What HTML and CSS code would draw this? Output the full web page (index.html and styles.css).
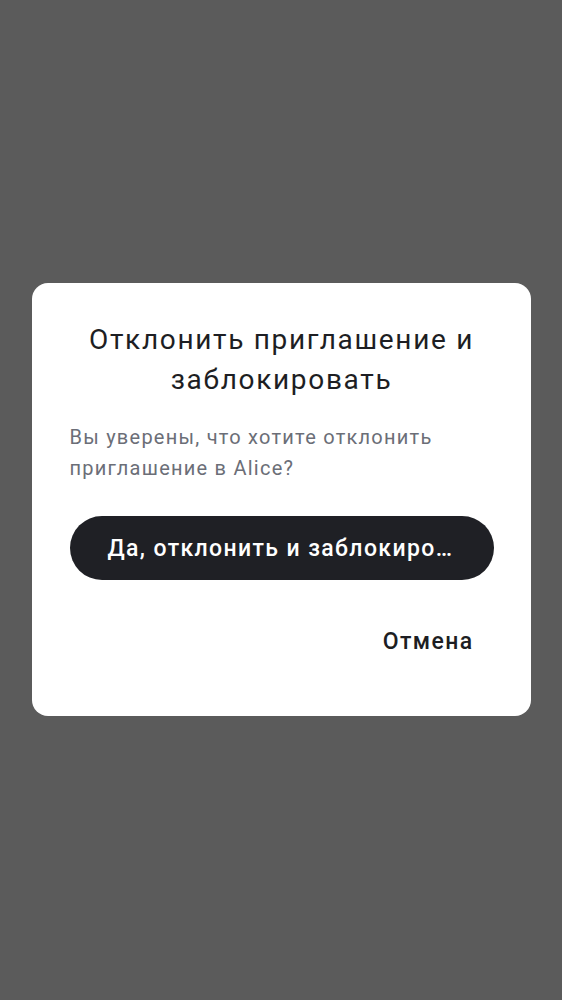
FILE: index.html
```html
<!DOCTYPE html>
<html lang="ru">
<head>
<meta charset="utf-8">
<link rel="stylesheet" href="styles.css">
</head>
<body>
<div class="overlay">
  <div class="dialog">
    <h2 class="title">Отклонить приглашение и заблокировать</h2>
    <p class="message">Вы уверены, что хотите отклонить приглашение в Alice?</p>
    <button class="primary">Да, отклонить и заблокировать</button>
    <div class="actions">
      <button class="text-btn">Отмена</button>
    </div>
  </div>
</div>
</body>
</html>
```
FILE: styles.css
```css
html, body {
  margin: 0;
  padding: 0;
  background: #5b5b5b;
}
.overlay {
  width: 562px;
  height: 1000px;
  display: flex;
  justify-content: center;
  align-items: flex-start;
  padding-top: 283px;
  box-sizing: border-box;
  font-family: Roboto, "Noto Sans", sans-serif;
}
.dialog {
  width: 499px;
  box-sizing: border-box;
  background: #ffffff;
  border-radius: 16px;
  padding: 37px 37px 51px 38px;
  display: flex;
  flex-direction: column;
}
.title {
  margin: 0;
  font-size: 28px;
  line-height: 40px;
  letter-spacing: 0.06em;
  font-weight: 400;
  color: #1d1e23;
  text-align: center;
}
.message {
  margin: 22px 0 0;
  font-size: 20px;
  line-height: 31px;
  letter-spacing: 0.062em;
  color: #6b6e77;
}
.primary {
  margin-top: 32px;
  height: 64px;
  border: none;
  border-radius: 32px;
  background: #1f2025;
  color: #ffffff;
  font-family: inherit;
  font-size: 23px;
  font-weight: 500;
  letter-spacing: 0.06em;
  padding: 0 38px;
  white-space: nowrap;
  overflow: hidden;
  text-overflow: ellipsis;
}
.actions {
  margin-top: 37px;
  display: flex;
  justify-content: flex-end;
}
.text-btn {
  height: 48px;
  border: none;
  background: transparent;
  font-family: inherit;
  font-size: 23px;
  font-weight: 500;
  letter-spacing: 0.06em;
  color: #1d1e23;
  padding: 0 20px;
}
```
